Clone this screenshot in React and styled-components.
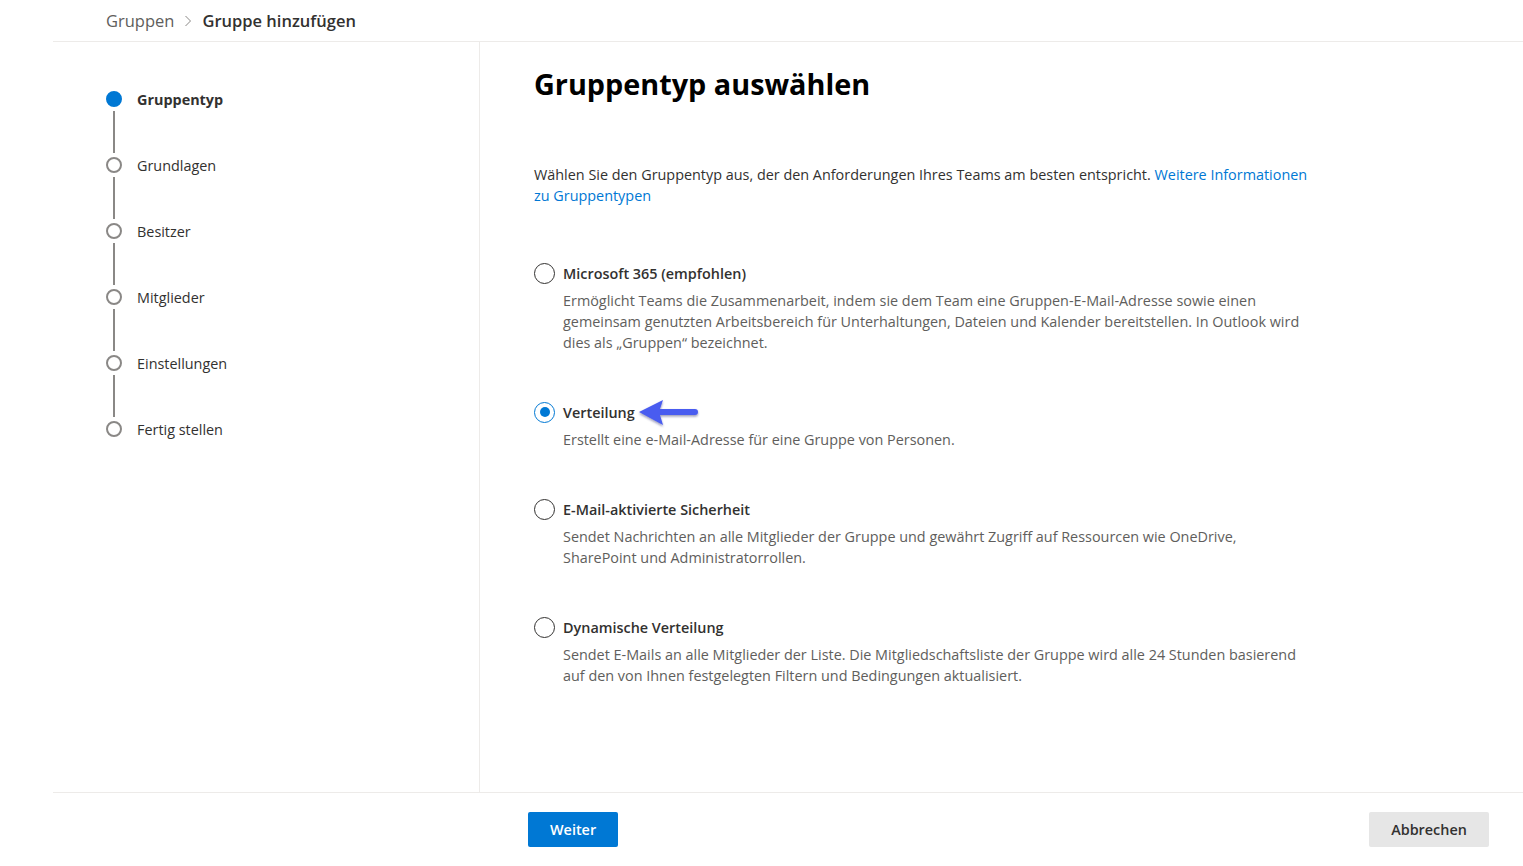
import React from "react";
import styled, { createGlobalStyle } from "styled-components";

const GlobalStyle = createGlobalStyle`
  html, body {
    margin: 0;
    padding: 0;
    background: #ffffff;
  }
  body {
    font-family: "Open Sans", "Noto Sans", Arial, sans-serif;
    color: #323130;
  }
`;

const Page = styled.div`
  width: 1523px;
  height: 866px;
  padding-left: 53px;
  box-sizing: border-box;
  display: flex;
  flex-direction: column;
  overflow: hidden;
`;

const Header = styled.div`
  height: 41px;
  border-bottom: 1px solid #edebe9;
  display: flex;
  align-items: center;
  padding-left: 53px;
  font-size: 16.5px;
`;

const Crumb = styled.span`
  color: ${(p) => (p.current ? "#323130" : "#605e5c")};
  font-weight: ${(p) => (p.current ? 600 : 400)};
`;

const Chevron = styled.span`
  display: inline-flex;
  margin: 0 10px;
  color: #8a8886;
`;

const Body = styled.div`
  flex: 0 0 750px;
  display: flex;
`;

const Steps = styled.div`
  width: 427px;
  border-right: 1px solid #edebe9;
  padding: 49px 0 0 53px;
  box-sizing: border-box;
`;

const Step = styled.div`
  display: flex;
  flex-direction: column;
`;

const StepRow = styled.div`
  display: flex;
  align-items: center;
  height: 16px;
  font-size: 14.4px;
  font-weight: ${(p) => (p.active ? 700 : 400)};
  color: #323130;
`;

const Dot = styled.span`
  width: 16px;
  height: 16px;
  box-sizing: border-box;
  border-radius: 50%;
  border: 2px solid ${(p) => (p.active ? "#0078d4" : "#8a8886")};
  background: ${(p) => (p.active ? "#0078d4" : "#ffffff")};
  margin-right: 15px;
  flex: none;
`;

const Connector = styled.span`
  width: 2px;
  height: 42px;
  margin: 4px 0 4px 7px;
  background: #8a8886;
`;

const Content = styled.div`
  flex: 1;
  padding: 24px 0 0 54px;
`;

const Title = styled.h1`
  margin: 0;
  font-size: 28.8px;
  line-height: 36px;
  font-weight: 700;
  color: #000000;
`;

const Intro = styled.p`
  margin: 62px 0 0;
  width: 788px;
  font-size: 14.4px;
  line-height: 21px;
  color: #323130;
`;

const Link = styled.a`
  color: #0078d4;
  text-decoration: none;
`;

const Options = styled.div`
  margin-top: 57px;
  display: flex;
  flex-direction: column;
  gap: 49px;
`;

const Option = styled.div`
  display: flex;
  flex-direction: column;
`;

const OptionHead = styled.label`
  display: flex;
  align-items: center;
  height: 20px;
  font-size: 14.4px;
  font-weight: 600;
  color: #323130;
`;

const OptionLabel = styled.span`
  position: relative;
`;

const Radio = styled.span`
  width: 21px;
  height: 21px;
  box-sizing: border-box;
  border-radius: 50%;
  border: 1px solid ${(p) => (p.checked ? "#0078d4" : "#323130")};
  margin-right: 8px;
  display: flex;
  align-items: center;
  justify-content: center;
  &::after {
    content: "";
    display: ${(p) => (p.checked ? "block" : "none")};
    width: 10px;
    height: 10px;
    border-radius: 50%;
    background: #0078d4;
  }
`;

const OptionText = styled.div`
  margin: 7px 0 0 29px;
  width: 747px;
  font-size: 14.4px;
  line-height: 21px;
  color: #605e5c;
`;

const Arrow = styled.svg`
  position: absolute;
  left: calc(100% + 1px);
  top: 50%;
  margin-top: -13px;
`;

const Footer = styled.div`
  border-top: 1px solid #edebe9;
  flex: 1;
  display: flex;
  align-items: flex-start;
  padding: 19px 34px 0 475px;
`;

const Button = styled.button`
  height: 35px;
  padding: 0 22px;
  min-width: ${(p) => (p.primary ? "90px" : "120px")};
  border: none;
  border-radius: 2px;
  font-family: inherit;
  font-size: 14.4px;
  font-weight: 600;
  background: ${(p) => (p.primary ? "#0078d4" : "#e6e6e6")};
  color: ${(p) => (p.primary ? "#ffffff" : "#323130")};
  margin-left: ${(p) => (p.push ? "auto" : "0")};
`;

const steps = ["Gruppentyp", "Grundlagen", "Besitzer", "Mitglieder", "Einstellungen", "Fertig stellen"];

const options = [
  {
    title: "Microsoft 365 (empfohlen)",
    text: "Ermöglicht Teams die Zusammenarbeit, indem sie dem Team eine Gruppen-E-Mail-Adresse sowie einen gemeinsam genutzten Arbeitsbereich für Unterhaltungen, Dateien und Kalender bereitstellen. In Outlook wird dies als „Gruppen“ bezeichnet.",
  },
  {
    title: "Verteilung",
    text: "Erstellt eine e-Mail-Adresse für eine Gruppe von Personen.",
    checked: true,
  },
  {
    title: "E-Mail-aktivierte Sicherheit",
    text: "Sendet Nachrichten an alle Mitglieder der Gruppe und gewährt Zugriff auf Ressourcen wie OneDrive, SharePoint und Administratorrollen.",
  },
  {
    title: "Dynamische Verteilung",
    text: "Sendet E-Mails an alle Mitglieder der Liste. Die Mitgliedschaftsliste der Gruppe wird alle 24 Stunden basierend auf den von Ihnen festgelegten Filtern und Bedingungen aktualisiert.",
  },
];

const PointerArrow = () => (
  <Arrow width="70" height="30" viewBox="0 0 70 30">
    <defs>
      <filter id="shade" x="-20%" y="-30%" width="140%" height="170%">
        <feDropShadow dx="0" dy="1.5" stdDeviation="1.2" floodColor="#1a1f5c" floodOpacity="0.45" />
      </filter>
    </defs>
    <g filter="url(#shade)">
      <path d="M3 13 L27 1 L24 10 L59 10 Q62 10 62 13 Q62 16 59 16 L24 16 L27 26 Z" fill="#4a5cf0" />
    </g>
  </Arrow>
);

export default function App() {
  return (
    <>
      <GlobalStyle />
      <Page>
        <Header>
          <Crumb>Gruppen</Crumb>
          <Chevron>
            <svg width="8" height="12" viewBox="0 0 8 12">
              <path d="M1.5 1 L6.5 6 L1.5 11" fill="none" stroke="currentColor" strokeWidth="1" />
            </svg>
          </Chevron>
          <Crumb current>Gruppe hinzufügen</Crumb>
        </Header>
        <Body>
          <Steps>
            {steps.map((s, i) => (
              <Step key={s}>
                <StepRow active={i === 0}>
                  <Dot active={i === 0} />
                  {s}
                </StepRow>
                {i < steps.length - 1 && <Connector />}
              </Step>
            ))}
          </Steps>
          <Content>
            <Title>Gruppentyp auswählen</Title>
            <Intro>
              Wählen Sie den Gruppentyp aus, der den Anforderungen Ihres Teams am besten entspricht.{" "}
              <Link href="#">Weitere Informationen zu Gruppentypen</Link>
            </Intro>
            <Options>
              {options.map((o) => (
                <Option key={o.title}>
                  <OptionHead>
                    <Radio checked={o.checked} />
                    <OptionLabel>
                      {o.title}
                      {o.checked && <PointerArrow />}
                    </OptionLabel>
                  </OptionHead>
                  <OptionText>{o.text}</OptionText>
                </Option>
              ))}
            </Options>
          </Content>
        </Body>
        <Footer>
          <Button primary>Weiter</Button>
          <Button push>Abbrechen</Button>
        </Footer>
      </Page>
    </>
  );
}
